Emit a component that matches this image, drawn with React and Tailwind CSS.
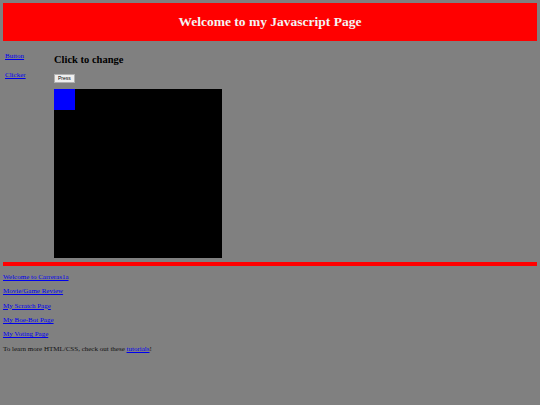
export default function App() {
  const serif = { fontFamily: '"Liberation Serif", "Times New Roman", serif' };
  return (
    <div className="w-[540px] h-[405px] bg-[#808080] overflow-hidden" style={serif}>
      <div className="pt-[3px] px-[3px]">
        <div className="h-[38px] bg-[#ff0000] flex items-center justify-center">
          <h1 className="text-[13.5px] font-bold text-[#f4f4f4] leading-none">Welcome to my Javascript Page</h1>
        </div>
      </div>
      <div className="flex h-[221px]">
        <div className="w-[54px] pl-[5px] pt-[11px] flex flex-col gap-[11px]">
          <a href="#" className="text-[7px] leading-[8px] text-[#0000ee] underline">Button</a>
          <a href="#" className="text-[7px] leading-[8px] text-[#0000ee] underline">Clicker</a>
        </div>
        <div className="flex flex-col pt-[12px]">
          <h3 className="text-[10.5px] font-bold leading-[13px] text-black">Click to change</h3>
          <div className="mt-[8px] flex">
            <button className="h-[9px] px-[3px] bg-[#efefef] border border-[#b0b0b0] text-[5px] leading-none text-black" style={{ fontFamily: '"Liberation Sans", Arial, sans-serif' }}>Press</button>
          </div>
          <div className="mt-[6px] w-[168px] h-[169px] bg-black">
            <div className="w-[21px] h-[21px] bg-[#0000ff]" />
          </div>
        </div>
      </div>
      <div className="mx-[3px] h-[4px] bg-[#ff0000]" />
      <div className="pl-[3px] pt-[7px] flex flex-col gap-[6.35px] text-[7px] leading-[8px]">
        <a href="#" className="text-[#0000ee] underline w-fit">Welcome to Carreras1a</a>
        <a href="#" className="text-[#0000ee] underline w-fit">Movie/Game Review</a>
        <a href="#" className="text-[#0000ee] underline w-fit">My Scratch Page</a>
        <a href="#" className="text-[#0000ee] underline w-fit">My Boe-Bot Page</a>
        <a href="#" className="text-[#0000ee] underline w-fit">My Voting Page</a>
        <p className="text-[#111]">To learn more HTML/CSS, check out these <a href="#" className="text-[#0000ee] underline">tutorials</a>!</p>
      </div>
    </div>
  );
}
